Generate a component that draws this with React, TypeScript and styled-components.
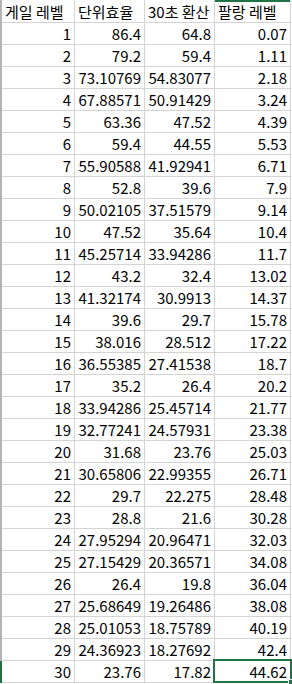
import React from 'react'
import styled, { createGlobalStyle } from 'styled-components'

const GlobalStyle = createGlobalStyle`
  html, body {
    margin: 0;
    padding: 0;
    background: #fff;
  }
  body {
    font-family: "Noto Sans CJK KR", "Noto Sans", sans-serif;
    color: #000;
  }
`;

export const Sheet = styled.div`
  width: 292px;
  height: 684px;
  overflow: hidden;
  background: #fff;
`;

export const Row = styled.div<{ $head?: boolean }>`
  display: grid;
  grid-template-columns: 2px 73px 70px 70px 76px;
  height: ${p => (p.$head ? 23 : 22)}px;
`;

export const RowMark = styled.div<{ $active?: boolean }>`
  background: ${p => (p.$active ? '#217346' : '#b4b4b4')};
`;

export const Cell = styled.div<{ $head?: boolean; $selCol?: boolean }>`
  position: relative;
  box-sizing: border-box;
  border-right: 1px solid #d4d4d4;
  border-bottom: 1px solid #d4d4d4;
  padding: 0 3px;
  display: flex;
  align-items: center;
  justify-content: ${p => (p.$head ? 'flex-start' : 'flex-end')};
  font-size: 15px;
  line-height: 1;
  white-space: nowrap;
  overflow: visible;
  box-shadow: ${p => (p.$selCol ? 'inset 0 2px 0 #217346' : 'none')};
`;

export const Selection = styled.div`
  position: absolute;
  left: -2px;
  top: -2px;
  right: -2px;
  bottom: -1px;
  border: 2px solid #217346;
  pointer-events: none;
`;

export const FillHandle = styled.div`
  position: absolute;
  right: -5px;
  bottom: -5px;
  width: 5px;
  height: 5px;
  background: #217346;
  border: 1px solid #fff;
`;

const headers = ['게일 레벨', '단위효율', '30초 환산', '팔랑 레벨'];

const rows: [string, string, string][] = [
  ['86.4', '64.8', '0.07'],
  ['79.2', '59.4', '1.11'],
  ['73.10769', '54.83077', '2.18'],
  ['67.88571', '50.91429', '3.24'],
  ['63.36', '47.52', '4.39'],
  ['59.4', '44.55', '5.53'],
  ['55.90588', '41.92941', '6.71'],
  ['52.8', '39.6', '7.9'],
  ['50.02105', '37.51579', '9.14'],
  ['47.52', '35.64', '10.4'],
  ['45.25714', '33.94286', '11.7'],
  ['43.2', '32.4', '13.02'],
  ['41.32174', '30.9913', '14.37'],
  ['39.6', '29.7', '15.78'],
  ['38.016', '28.512', '17.22'],
  ['36.55385', '27.41538', '18.7'],
  ['35.2', '26.4', '20.2'],
  ['33.94286', '25.45714', '21.77'],
  ['32.77241', '24.57931', '23.38'],
  ['31.68', '23.76', '25.03'],
  ['30.65806', '22.99355', '26.71'],
  ['29.7', '22.275', '28.48'],
  ['28.8', '21.6', '30.28'],
  ['27.95294', '20.96471', '32.03'],
  ['27.15429', '20.36571', '34.08'],
  ['26.4', '19.8', '36.04'],
  ['25.68649', '19.26486', '38.08'],
  ['25.01053', '18.75789', '40.19'],
  ['24.36923', '18.27692', '42.4'],
  ['23.76', '17.82', '44.62'],
];

export default function App() {
  const last = rows.length - 1;
  return (
    <>
      <GlobalStyle />
      <Sheet>
        <Row $head>
          <RowMark />
          {headers.map((h, i) => (
            <Cell key={h} $head $selCol={i === 3}>{h}</Cell>
          ))}
        </Row>
        {rows.map((r, i) => (
          <Row key={i}>
            <RowMark $active={i === last} />
            <Cell>{i + 1}</Cell>
            <Cell>{r[0]}</Cell>
            <Cell>{r[1]}</Cell>
            <Cell>
              {r[2]}
              {i === last && (
                <Selection>
                  <FillHandle />
                </Selection>
              )}
            </Cell>
          </Row>
        ))}
      </Sheet>
    </>
  )
}
